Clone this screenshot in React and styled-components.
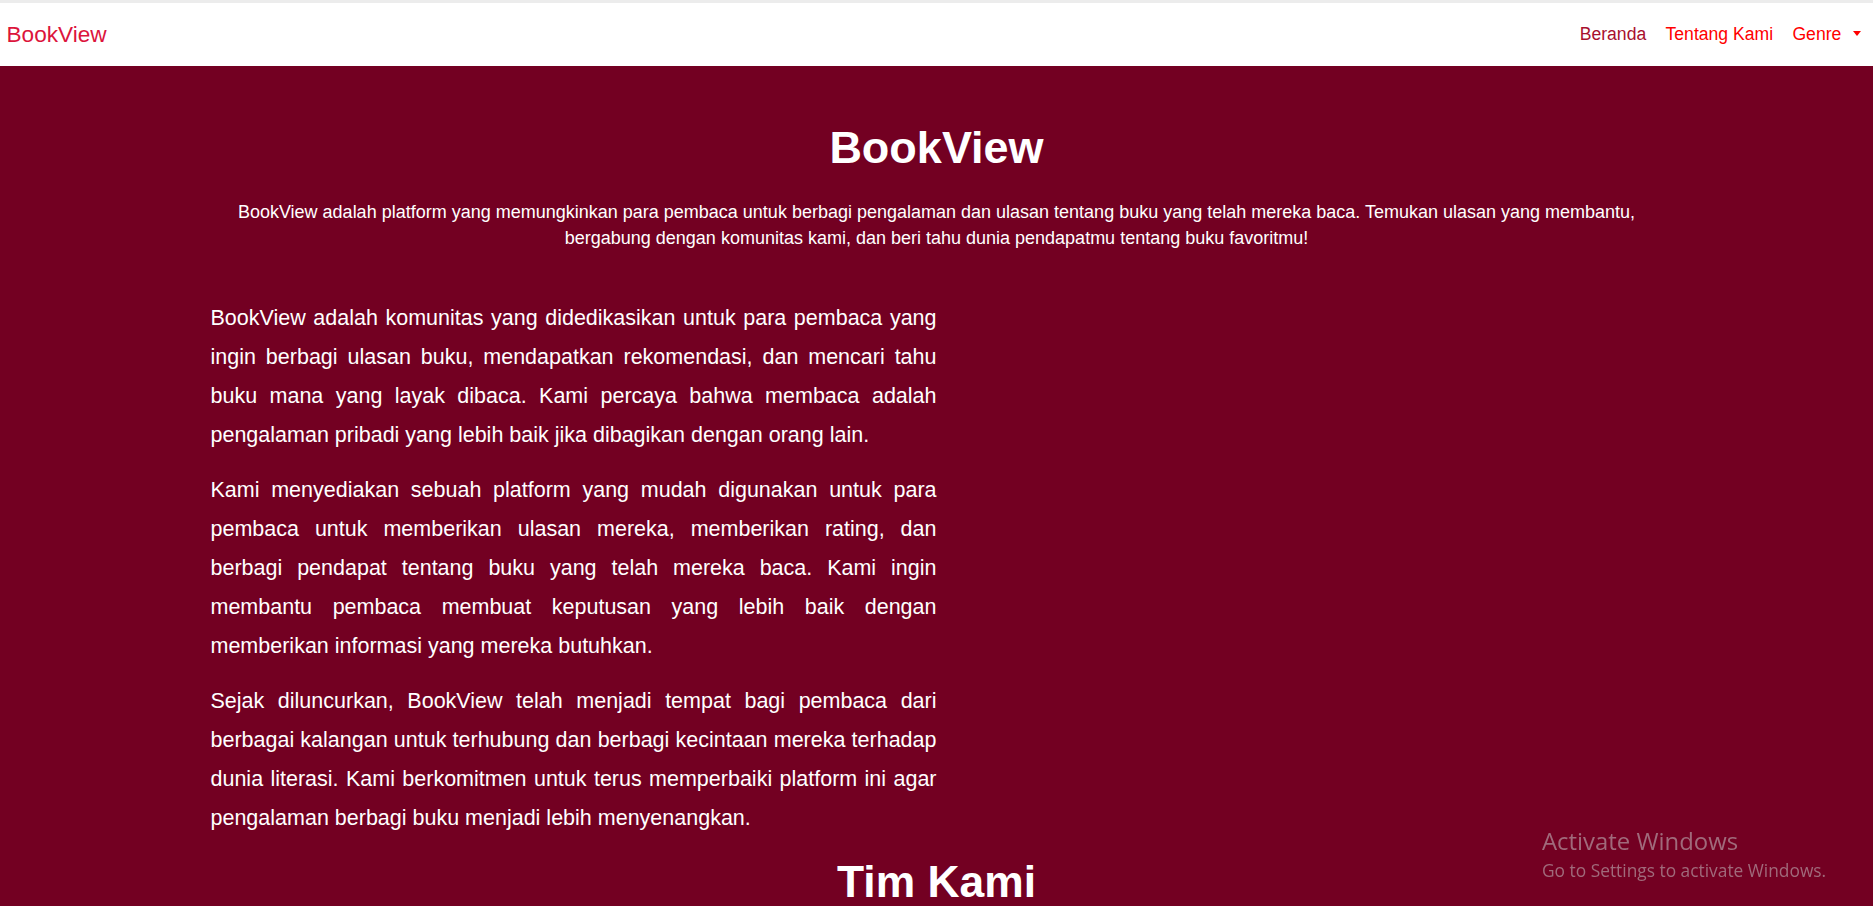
import React from "react";
import styled, { createGlobalStyle } from "styled-components";

const GlobalStyle = createGlobalStyle`
  html {
    scrollbar-width: none;
    overflow-x: hidden;
  }
  html::-webkit-scrollbar, body::-webkit-scrollbar { display: none; }
  body {
    margin: 0;
    background: #ffffff;
    font-family: "Liberation Sans", Arial, sans-serif;
  }
  * { box-sizing: border-box; }
`;

const Page = styled.div`
  min-height: 100vh;
  display: flex;
  flex-direction: column;
`;

const TopStrip = styled.div`
  height: 3px;
  background: #ececec;
`;

const Navbar = styled.nav`
  height: 63px;
  background: #ffffff;
  display: flex;
  align-items: center;
  justify-content: space-between;
  padding: 0 12px 0 6.5px;
`;

const Brand = styled.a`
  font-size: 22.6px;
  color: #dc143c;
  text-decoration: none;
`;

const NavList = styled.ul`
  list-style: none;
  margin: 0;
  padding: 0;
  display: flex;
  align-items: center;
  gap: 19.3px;
`;

const NavLink = styled.a`
  display: inline-flex;
  align-items: center;
  font-size: 17.6px;
  color: ${(p) => (p.$active ? "#a8102e" : "#ff0000")};
  text-decoration: none;
`;

const Caret = styled.span`
  display: inline-block;
  width: 0;
  height: 0;
  margin-left: 11.7px;
  margin-top: -3px;
  border-top: 5px solid #ff0000;
  border-left: 4.5px solid transparent;
  border-right: 4.5px solid transparent;
`;

const Main = styled.main`
  flex: 1;
  background: #730022;
  color: #ffffff;
  padding-top: 54.6px;
`;

const Container = styled.div`
  width: 1452px;
  margin: 0 auto;
  padding: 0 13.2px;
`;

const Title = styled.h1`
  margin: ${(p) => (p.$team ? "3.7px 0 20px" : "0")};
  font-size: ${(p) => (p.$team ? "44.4px" : "45px")};
  line-height: 53.4px;
  font-weight: 700;
  text-align: center;
`;

const Lead = styled.p`
  margin: 25px 0 0;
  font-size: 18px;
  line-height: 26.4px;
  text-align: center;
`;

const AboutColumn = styled.div`
  width: 726px;
  margin: 47px -13.2px 0;
`;

const Para = styled.p`
  margin: 0 0 16.25px;
  font-size: 21.5px;
  line-height: 39px;
  text-align: justify;
`;

const Watermark = styled.div`
  position: fixed;
  left: 1542px;
  top: 827px;
  font-family: "Open Sans", "Noto Sans", sans-serif;
  color: #a06a7b;
  pointer-events: none;
`;

const WatermarkTitle = styled.div`
  font-size: 23.9px;
  line-height: 27px;
`;

const WatermarkText = styled.div`
  margin-top: 2.5px;
  font-size: 17.35px;
  line-height: 27px;
`;

export default function App() {
  return (
    <Page>
      <GlobalStyle />
      <TopStrip />
      <Navbar>
        <Brand href="#">BookView</Brand>
        <NavList>
          <li>
            <NavLink href="#" $active>Beranda</NavLink>
          </li>
          <li>
            <NavLink href="#">Tentang Kami</NavLink>
          </li>
          <li>
            <NavLink href="#">
              Genre
              <Caret />
            </NavLink>
          </li>
        </NavList>
      </Navbar>
      <Main>
        <Container>
          <Title>BookView</Title>
          <Lead>
            BookView adalah platform yang memungkinkan para pembaca untuk berbagi pengalaman dan ulasan tentang buku yang telah mereka baca. Temukan ulasan yang membantu, bergabung dengan komunitas kami, dan beri tahu dunia pendapatmu tentang buku favoritmu!
          </Lead>
          <AboutColumn>
            <Para>
              BookView adalah komunitas yang didedikasikan untuk para pembaca yang ingin berbagi ulasan buku, mendapatkan rekomendasi, dan mencari tahu buku mana yang layak dibaca. Kami percaya bahwa membaca adalah pengalaman pribadi yang lebih baik jika dibagikan dengan orang lain.
            </Para>
            <Para>
              Kami menyediakan sebuah platform yang mudah digunakan untuk para pembaca untuk memberikan ulasan mereka, memberikan rating, dan berbagi pendapat tentang buku yang telah mereka baca. Kami ingin membantu pembaca membuat keputusan yang lebih baik dengan memberikan informasi yang mereka butuhkan.
            </Para>
            <Para>
              Sejak diluncurkan, BookView telah menjadi tempat bagi pembaca dari berbagai kalangan untuk terhubung dan berbagi kecintaan mereka terhadap dunia literasi. Kami berkomitmen untuk terus memperbaiki platform ini agar pengalaman berbagi buku menjadi lebih menyenangkan.
            </Para>
          </AboutColumn>
          <Title $team>Tim Kami</Title>
        </Container>
      </Main>
      <Watermark>
        <WatermarkTitle>Activate Windows</WatermarkTitle>
        <WatermarkText>Go to Settings to activate Windows.</WatermarkText>
      </Watermark>
    </Page>
  );
}
